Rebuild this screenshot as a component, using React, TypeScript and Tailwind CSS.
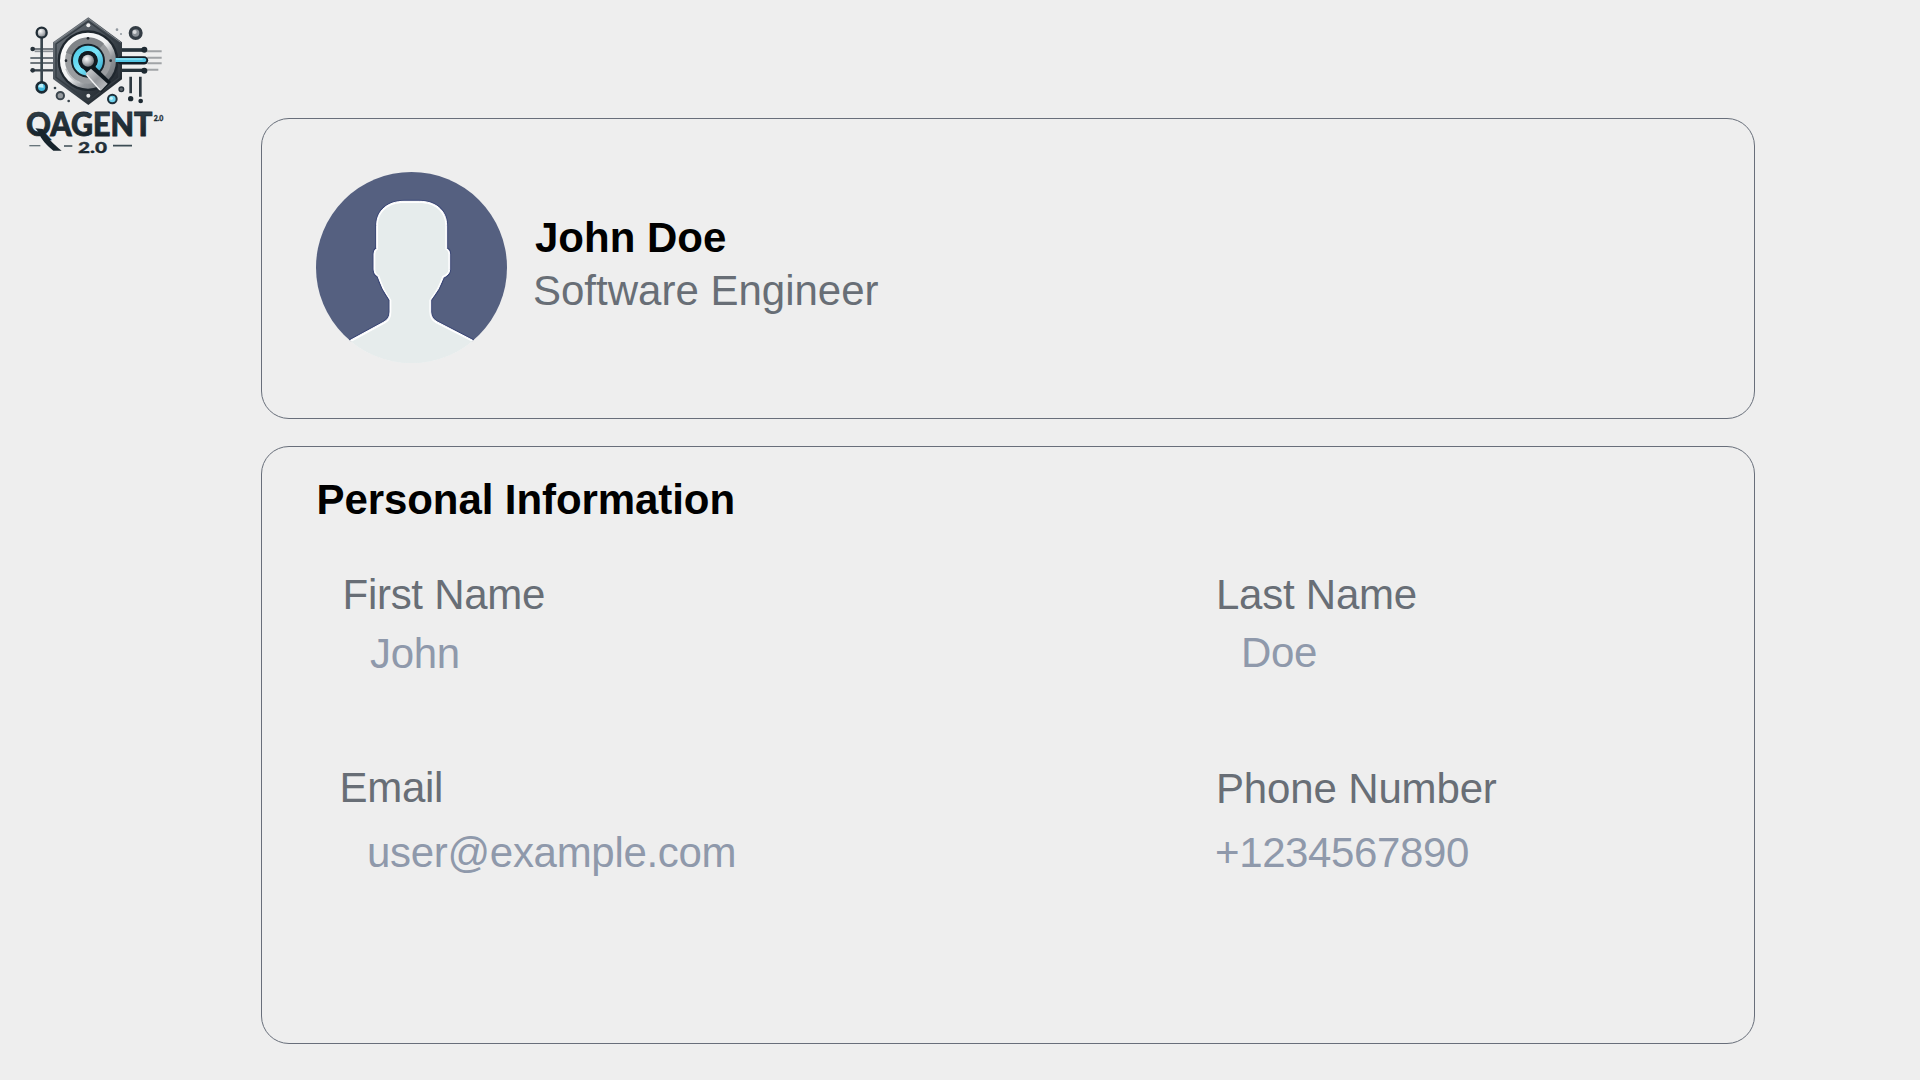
function Logo() {
  return (
    <svg viewBox="0 0 510 510" className="block h-[170px] w-[170px]" role="img" aria-label="QAgent 2.0">
      <defs>
        <linearGradient id="plate" x1="0" y1="0" x2="1" y2="1">
          <stop offset="0" stopColor="#757b82" />
          <stop offset="0.45" stopColor="#464e56" />
          <stop offset="1" stopColor="#151c22" />
        </linearGradient>
        <linearGradient id="dial" x1="0" y1="0" x2="1" y2="1">
          <stop offset="0" stopColor="#ffffff" />
          <stop offset="0.5" stopColor="#f0f1f2" />
          <stop offset="0.68" stopColor="#92969a" />
          <stop offset="1" stopColor="#5c6166" />
        </linearGradient>
        <linearGradient id="cyan" x1="0" y1="0" x2="1" y2="1">
          <stop offset="0" stopColor="#4fcbe8" />
          <stop offset="0.5" stopColor="#7be4f8" />
          <stop offset="1" stopColor="#35abd0" />
        </linearGradient>
        <linearGradient id="handle" x1="0" y1="0" x2="1" y2="1">
          <stop offset="0" stopColor="#d6d8da" />
          <stop offset="0.5" stopColor="#96999d" />
          <stop offset="1" stopColor="#c4c7ca" />
        </linearGradient>
        <linearGradient id="ink" x1="0" y1="0" x2="0" y2="1">
          <stop offset="0" stopColor="#35434c" />
          <stop offset="1" stopColor="#111d25" />
        </linearGradient>
        <radialGradient id="ball" cx="0.38" cy="0.35" r="0.7">
          <stop offset="0" stopColor="#ffffff" />
          <stop offset="0.5" stopColor="#b9bcc0" />
          <stop offset="1" stopColor="#6b7076" />
        </radialGradient>
      </defs>

      {/* circuit traces, left */}
      <g fill="none" strokeWidth="6">
        <path d="M68 147H135" stroke="#39434b" strokeWidth="4" />
        <path d="M74 154H135" stroke="#8b9095" strokeWidth="5" />
        <path d="M61 174H135M61 189H135" stroke="#6d757b" />
        <path d="M68 211H135" stroke="#39434b" strokeWidth="7" />
        <path d="M95 112V248" stroke="#39464e" strokeWidth="8" />
      </g>
      <circle cx="68" cy="147" r="7" fill="#27323a" />
      <circle cx="68" cy="211" r="7" fill="#27323a" />
      <circle cx="95" cy="98" r="15" fill="url(#ball)" stroke="#222e37" strokeWidth="7" />
      <circle cx="95" cy="262" r="15" fill="#3fb6dc" stroke="#1b2a34" strokeWidth="8" />
      <path d="M85 262A10 10 0 0 1 99 252L101 263Z" fill="#b9effa" />

      {/* circuit traces, right */}
      <g fill="none">
        <path d="M410 154H455M412 173H455M412 190H455M410 209H445" stroke="#a1a4a7" strokeWidth="6" />
        <path d="M335 150H403" stroke="#26323a" strokeWidth="11" />
        <path d="M335 211H403" stroke="#26323a" strokeWidth="10" />
      </g>
      <circle cx="403" cy="149" r="9" fill="#1e2a32" />
      <circle cx="403" cy="212" r="9" fill="#1e2a32" />

      {/* small nodes */}
      <circle cx="377" cy="99" r="16" fill="#8c9298" stroke="#333c44" strokeWidth="10" />
      <circle cx="374" cy="96" r="6" fill="#d7d9db" />
      <circle cx="321" cy="89" r="4" fill="#91989f" />
      <circle cx="333" cy="102" r="3" fill="#91989f" />
      <circle cx="135" cy="264" r="4" fill="#3a454d" />
      <circle cx="151" cy="287" r="11" fill="#979b9f" stroke="#3b454d" strokeWidth="6" />
      <circle cx="176" cy="303" r="4" fill="#3a454d" />
      <circle cx="334" cy="268" r="7" fill="#60676d" stroke="#27323b" strokeWidth="4" />
      <circle cx="307" cy="297" r="13" fill="#70d2ec" stroke="#1e303b" strokeWidth="6" />
      <circle cx="304" cy="295" r="5" fill="#c6f3fb" />
      <path d="M362 230V280M391 230V290" fill="none" stroke="#2e3941" strokeWidth="8" />
      <circle cx="362" cy="296" r="8" fill="#1e2a32" />
      <circle cx="392" cy="303" r="7" fill="#1e2a32" />

      {/* hexagonal plate */}
      <path d="M235 52L336 127V238L235 315L129 237V127Z" fill="url(#plate)" />
      <path d="M235 64L327 132V233L235 303L138 232V132Z" fill="none" stroke="#343c43" strokeWidth="4" />
      <path d="M133 128L235 56L332 127" fill="none" stroke="#80868b" strokeWidth="3" />
      <circle cx="234" cy="182" r="91" fill="#1f272e" />
      <circle cx="234" cy="182" r="84" fill="url(#dial)" />
      <circle cx="234" cy="182" r="69" fill="#9a9da0" />
      <path d="M168 158A70 70 0 0 1 282 131L268 146A50 50 0 0 0 187 165Z" fill="#808488" />
      <path d="M168 206A70 70 0 0 0 210 248" fill="none" stroke="#c0c3c5" strokeWidth="5" />
      <circle cx="234" cy="182" r="51" fill="#17222a" />
      <circle cx="234" cy="182" r="37" fill="none" stroke="url(#cyan)" strokeWidth="16" />
      <circle cx="234" cy="182" r="29" fill="#121b22" />
      <path d="M222 208L247 191L303 246L273 277Z" fill="#10191f" />
      <path d="M226 221L243 206L293 251L272 273Z" fill="url(#handle)" />
      <path d="M230 225L270 270" stroke="#f2f3f4" strokeWidth="4" />
      <circle cx="234" cy="182" r="18" fill="url(#ball)" />
      <circle cx="235" cy="76" r="6" fill="#f1f1f1" />
      <circle cx="235" cy="287" r="6" fill="#e8e9ea" />
      <circle cx="234" cy="115" r="4" fill="#23292f" />
      <circle cx="168" cy="182" r="4" fill="#23292f" />
      <circle cx="302" cy="182" r="4" fill="#23292f" />

      {/* highlighted trace */}
      <path d="M334 181H402" stroke="#111d26" strokeWidth="25" strokeLinecap="round" />
      <path d="M316 180H403" stroke="#54c6e4" strokeWidth="12" />
      <circle cx="403" cy="180" r="6" fill="#54c6e4" />
      <path d="M318 177H398" stroke="#93e6f6" strokeWidth="4" />

      {/* wordmark */}
      <g fill="url(#ink)" stroke="#1d2a32" fontFamily="Lato, sans-serif" fontWeight="900">
        <text x="48" y="407" fontSize="95" strokeWidth="2" textLength="75" lengthAdjust="spacingAndGlyphs">Q</text>
        <text x="121" y="407.5" fontSize="94" strokeWidth="2.5" textLength="306" lengthAdjust="spacingAndGlyphs">AGENT</text>
        <text x="431" y="362" fontSize="24" strokeWidth="1" textLength="29" lengthAdjust="spacingAndGlyphs">2.0</text>
        <text x="204" y="459" fontSize="47" strokeWidth="1" textLength="87" lengthAdjust="spacingAndGlyphs">2.0</text>
      </g>
      <path d="M76 385L98 387C108 411 130 432 155 452H130C112 437 91 416 87 398Z" fill="#17242c" />
      <path d="M58 437H91" stroke="#68757b" strokeWidth="4" />
      <path d="M162 438H187M309 437H366" stroke="#3c4c54" strokeWidth="5" />
    </svg>
  );
}

function Avatar() {
  const silhouette =
    "M301 691L402 636Q420 626 420 606V570Q396 538 384 499Q372 493 372 479V432Q372 420 380 416V347C380 300 415 274 462 274H508C555 274 590 300 590 347V416Q599 420 599 432V479Q599 493 580 502Q568 538 542 570V606Q543 626 562 636L668 691L700 780H270Z";
  return (
    <svg viewBox="198 186 573 573" className="block size-[191px] shrink-0" role="img" aria-label="Profile picture">
      <clipPath id="face">
        <circle cx="484.5" cy="472.5" r="286.5" />
      </clipPath>
      <g clipPath="url(#face)">
        <path d="M198 186H771V692H198Z" fill="#556080" />
        <path d={silhouette} fill="none" stroke="#3d4977" strokeWidth="9" />
        <path d={silhouette} fill="#ffffff" stroke="#ffffff" strokeWidth="3" />
        <path d="M307 694L406 640Q424 630 424 606V570Q400 538 388 497Q376 491 376 479V432Q376 422 384 418V347C384 304 417 279 462 279H508C553 279 586 304 586 347V418Q595 422 595 432V479Q595 491 577 498Q564 538 538 570V606Q539 630 558 640L664 694L700 790H270Z" fill="#e6ecec" />
        <path d="M301 694L240 780H730L668 694Z" fill="#e6ecec" />
      </g>
    </svg>
  );
}

type FieldProps = {
  label: string;
  value: string;
  labelClass: string;
  valueClass: string;
};

function Field({ label, value, labelClass, valueClass }: FieldProps) {
  return (
    <div className="flex flex-col items-start">
      <dt className={`text-[#686e76] ${labelClass}`}>{label}</dt>
      <dd className={`text-[#8f99ab] ${valueClass}`}>{value}</dd>
    </div>
  );
}

export default function App() {
  return (
    <div className="flex h-[1080px] w-[1920px] items-start overflow-hidden bg-[#eeeeee] font-['Liberation_Sans',Arial,sans-serif] text-[42px] leading-[47px] whitespace-nowrap">
      <header className="w-[261px] shrink-0 pl-[10px]">
        <Logo />
      </header>
      <main className="flex w-[1494px] flex-col gap-[27px] pt-[118px]">
        <section className="flex h-[301px] items-start rounded-[28px] border border-[#686e7a] pt-[53px] pl-[54px]">
          <Avatar />
          <div className="flex flex-col gap-[6px] pt-[42px] pl-[26px]">
            <h1 className="pl-[2px] font-bold text-black">John Doe</h1>
            <p className="text-[#686e76]">Software Engineer</p>
          </div>
        </section>
        <section className="h-[598px] rounded-[28px] border border-[#686e7a] pt-[29px] pl-[54px]">
          <h2 className="pl-[0.5px] font-bold tracking-[-0.08px] text-black">Personal Information</h2>
          <dl className="mt-12 grid grid-cols-[876.5px_1fr] grid-rows-[193px_112px] pl-[23.5px]">
            <Field label="First Name" value="John" labelClass="pl-[3px] tracking-[-0.28px]" valueClass="mt-3 pl-[30.5px] tracking-[-0.35px]" />
            <Field label="Last Name" value="Doe" labelClass="tracking-[-0.25px]" valueClass="mt-[11px] pl-[25px] tracking-[-0.4px]" />
            <Field label="Email" value="user@example.com" labelClass="tracking-[-0.3px]" valueClass="mt-[18px] pl-[27.5px] tracking-[-0.3px]" />
            <Field label="Phone Number" value="+1234567890" labelClass="pt-px tracking-[-0.15px]" valueClass="mt-[17px] -ml-px tracking-[-0.38px]" />
          </dl>
        </section>
      </main>
    </div>
  );
}
